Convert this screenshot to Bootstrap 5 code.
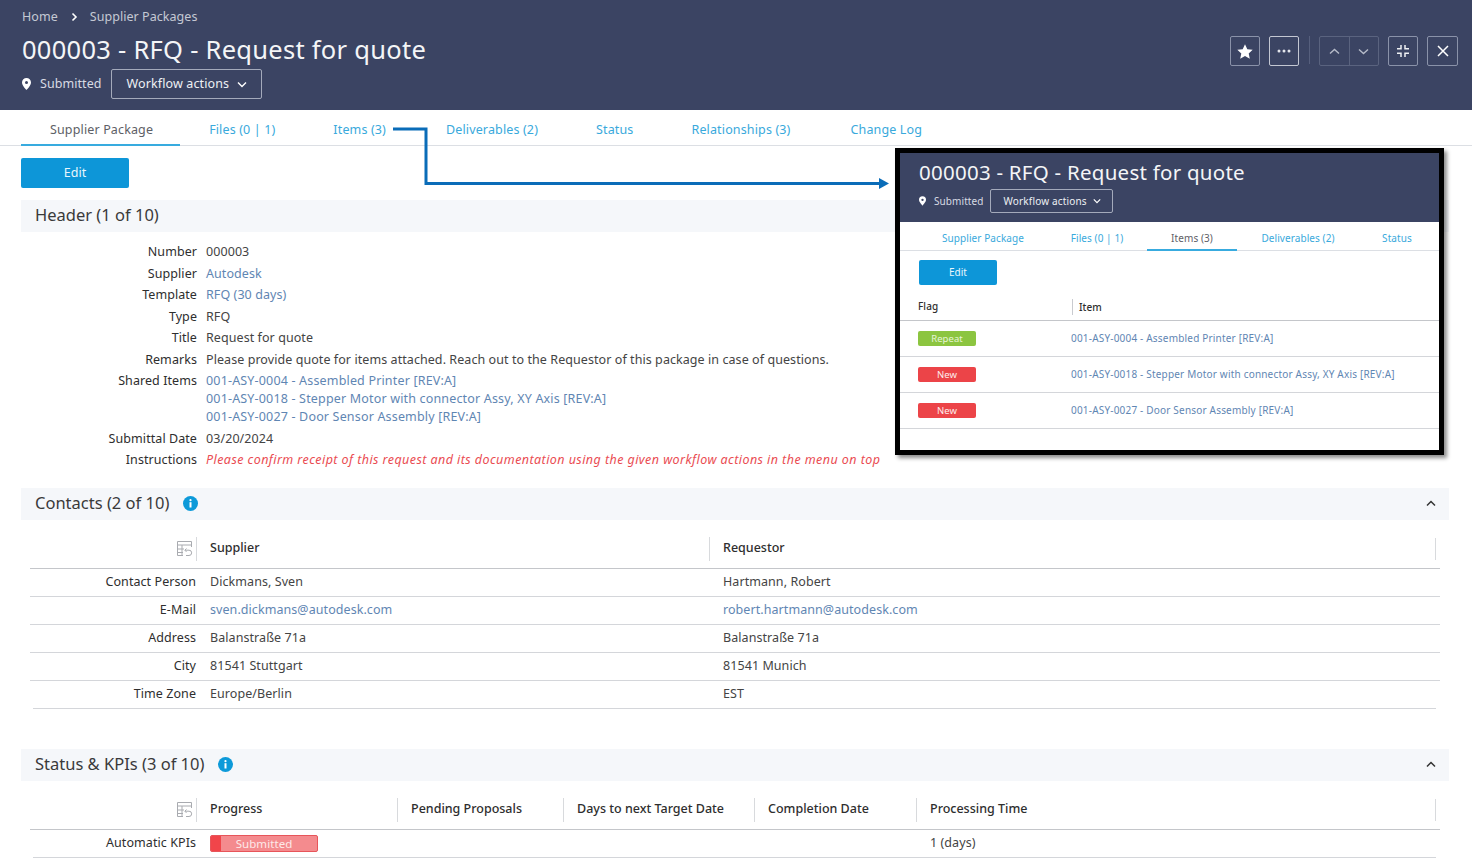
<!DOCTYPE html>
<html lang="en">
<head>
<meta charset="utf-8">
<title>000003 - RFQ - Request for quote</title>
<link href="https://cdn.jsdelivr.net/npm/bootstrap@5.3.0/dist/css/bootstrap.min.css" rel="stylesheet">
<style>
html,body{height:861px;overflow:hidden}
body{font-family:"Noto Sans",sans-serif;font-size:12.5px;color:#444;position:relative;letter-spacing:.07px;background:#fff}
a{text-decoration:none;color:#5f86b3}
.pkg-head{background:#3b4463;height:110px;padding:0 14px 0 22px;color:#fff}
.crumbs{height:33px;padding-bottom:0;line-height:16px;color:#c5c9d4;font-size:12.5px;letter-spacing:.05px}
.crumbs svg{margin:0 12px 0 13px}
.pkg-title{font-size:25.5px;font-weight:400;line-height:32px;margin:0 0 4px;letter-spacing:.27px;color:#f4f5f7}
.pin-status{color:#d8dbe3}
.pin-status>svg{margin-right:9px;flex:none}
.wf-btn{border:1px solid #a4aabb;color:#eef0f4;border-radius:2px;font-size:12.5px;height:30px;padding:0 14px 0 15px;margin-left:9px;background:transparent;display:inline-flex;align-items:center;gap:8px;letter-spacing:.12px}
.act-col{padding-top:36px}
.icon-box{width:30px;height:30px;border:1px solid #8a92a9;border-radius:2px;background:transparent;display:flex;align-items:center;justify-content:center;padding:0}
.icon-box.bright{border-color:#c3c7d2;margin-left:9px}
.icon-box.spaced{margin-left:9px}
.icon-box.wide{width:31px}
.bar-sep{width:1px;height:28px;background:#565f7d;margin:0 9px 0 10px}
.arrow-pair{display:flex;border:1px solid #5a637f;border-radius:2px;height:30px;width:60px}
.arrow-pair span{flex:1;display:flex;align-items:center;justify-content:center}
.arrow-pair span+span{border-left:1px solid #5a637f}
.tab-row{height:36px;border-bottom:1px solid #dcdfe4;padding-left:21px;flex-wrap:nowrap}
.tab-row .tab-lnk{padding:0 29px;height:36px;line-height:39px;color:#39a9dc;font-size:12.5px;display:block;white-space:nowrap;letter-spacing:.14px}
.tab-row .tab-lnk.on{color:#5e6066;border-bottom:2px solid #38abdf;padding-right:27px}
.tab-row .tab-lnk.roomy{padding-right:31px}
.edit-btn{background:#0d96d8;color:#e9f6fc;border:0;border-radius:2px;width:108px;height:30px;font-size:12.5px;padding:0;display:block}
.edit-btn.main{margin:12px 0 12px 21px}
.sec-bar{background:#f5f7fa;height:32px;margin:0 23px 0 21px;padding:0 14px 1px;display:flex;align-items:center;font-size:16.5px;letter-spacing:0;color:#3a3a3a}
.sec-bar .chev{margin-left:auto;margin-right:-1px}
.info-dot{margin-left:14px}
.field-grid{display:grid;grid-template-columns:176px 1fr;column-gap:9px;padding:9px 0 17px 21px;width:900px;line-height:21.5px}
.field-grid>.lab{text-align:right;color:#2e2e2e}
.shared{line-height:18px;padding:1.8px 0;letter-spacing:.17px}
.warn{color:#ea4c52;font-style:italic;white-space:nowrap;letter-spacing:.435px}
.grid-tbl{width:1410px;margin:10px 0 0 30px;table-layout:fixed;border-collapse:collapse;color:#444}
.grid-tbl td,.grid-tbl th{padding:0;height:28px;border-bottom:1px solid #d4d6da;vertical-align:middle;font-weight:400}
.grid-tbl th{height:39px;border-bottom-color:#c4c6ca;color:#2e2e2e;font-weight:500;letter-spacing:0}
.grid-tbl td:first-child{text-align:right;color:#2e2e2e}
.grid-tbl td+td{padding-left:14px}
.grid-tbl tr:last-child td{border-bottom:0;height:27px}
.hd-cell{display:flex;align-items:center;height:24px;padding-left:13px;border-left:1px solid #d8dadd}
.hd-icon{display:flex;justify-content:flex-end;padding-right:3px;height:24px;align-items:center}
.end-mark{position:relative}
.end-mark::after{content:"";position:absolute;right:4px;top:8px;bottom:8px;width:1px;background:#d8dadd}
.close-line{height:1px;background:#d4d6da;margin:0 36px 0 33px}
.gap-41{margin-top:40px}
.prog{display:flex;width:108px;height:17px;border-radius:2px;overflow:hidden;border:1px solid #e7555a;background:#f48b8e;color:#fde9e9;font-size:11.5px;line-height:15px}
.prog i{width:10px;background:#f1454a;display:block}
.prog span{flex:1;text-align:center;padding-right:10px}
/* inset */
.inset{position:absolute;left:895px;top:148px;width:549px;height:307px;border:5px solid #000;background:#fff;box-shadow:3px 3px 4px rgba(0,0,0,.45);font-size:10px;letter-spacing:.08px}
.inset-head{background:#3b4463;height:69px;padding:6px 0 0 19px;color:#fff}
.inset-title{font-size:20.5px;line-height:26px;letter-spacing:.25px;font-weight:400;margin:0 0 4px;color:#f4f5f7}
.inset-status{color:#d8dbe3;font-size:10px}
.inset .wf-btn{font-size:10px;height:24px;padding:0 11px 0 12px;margin-left:7px;gap:6px;letter-spacing:.17px}
.inset-tabs{height:29px;border-bottom:1px solid #dcdfe4;position:relative;flex-wrap:nowrap}
.inset-tabs .tab-lnk{height:29px;line-height:32px;color:#39a9dc;white-space:nowrap;text-align:center;display:block}
.inset-tabs .tab-lnk.on{color:#5e6066;border-bottom:2px solid #38abdf}
.tb-a{width:166px}.tb-b{width:62px}.tb-c{width:90px;margin-left:19px}.tb-d{width:122px}.tb-e{width:76px}
.edit-btn.small{width:78px;height:25px;font-size:10px;margin:9px 0 12px 19px}
.mini-tbl{width:100%;table-layout:fixed;border-collapse:collapse}
.mini-tbl th,.mini-tbl td{padding:0;height:36px;border-bottom:1px solid #d4d6da;font-weight:400}
.mini-tbl th{height:23px;border-bottom-color:#c4c6ca;color:#2e2e2e;vertical-align:top;padding-top:2px;font-weight:500}
.mini-tbl th:first-child,.mini-tbl td:first-child{padding-left:18px}
.mini-th{display:block;border-left:1px solid #c9cbd0;padding-left:6px;line-height:16px;margin-left:1px}
.flag{display:block;width:58px;height:15px;border-radius:2px;text-align:center;line-height:15px;color:#fdeceb;font-size:9.5px;background:#ec4448}
.flag.rep{background:#8cc540;color:#e8f5d6}
.mini-tbl a{letter-spacing:.19px}
.link-arrow{position:absolute;left:390px;top:125px;pointer-events:none}
</style>
</head>
<body>
<header class="pkg-head d-flex justify-content-between">
  <div>
    <div class="crumbs d-flex align-items-center"><span>Home</span><svg width="7" height="10" viewBox="0 0 7 10"><path d="M1.500 1.500 5 5 1.500 8.500" fill="none" stroke="#fff" stroke-width="1.600"/></svg><span>Supplier Packages</span></div>
    <h1 class="pkg-title">000003 - RFQ - Request for quote</h1>
    <div class="d-flex align-items-center pin-status">
      <svg width="9" height="12" viewBox="0 0 9 12"><path fill-rule="evenodd" fill="#fff" d="M4.500 0A4.500 4.500 0 0 0 0 4.500C0 7.500 4.500 12 4.500 12S9 7.500 9 4.500A4.500 4.500 0 0 0 4.500 0Zm0 3a1.500 1.500 0 1 1 0 3 1.500 1.500 0 0 1 0-3Z"/></svg>
      <span>Submitted</span>
      <button class="wf-btn" type="button">Workflow actions <svg width="10" height="7" viewBox="0 0 10 7"><path d="M1 1.500 5 5.500 9 1.500" fill="none" stroke="#fff" stroke-width="1.400"/></svg></button>
    </div>
  </div>
  <div class="act-col d-flex align-items-start">
    <button class="icon-box" type="button" aria-label="Favorite"><svg width="16" height="15" viewBox="0 0 16 15"><path fill="#fff" d="M8 .3 10.300 5.200 15.700 5.800 11.700 9.400 12.800 14.700 8 12 3.200 14.700 4.300 9.400 .3 5.800 5.700 5.200Z"/></svg></button>
    <button class="icon-box bright" type="button" aria-label="More"><svg width="14" height="4" viewBox="0 0 14 4"><circle cx="2" cy="2" r="1.500" fill="#e4e6ec"/><circle cx="7" cy="2" r="1.500" fill="#e4e6ec"/><circle cx="12" cy="2" r="1.500" fill="#e4e6ec"/></svg></button>
    <div class="bar-sep"></div>
    <div class="arrow-pair"><span><svg width="11" height="7" viewBox="0 0 11 7"><path d="M1 5.500 5.500 1.500 10 5.500" fill="none" stroke="#b6bbc9" stroke-width="1.400"/></svg></span><span><svg width="11" height="7" viewBox="0 0 11 7"><path d="M1 1.500 5.500 5.500 10 1.500" fill="none" stroke="#b6bbc9" stroke-width="1.400"/></svg></span></div>
    <button class="icon-box spaced" type="button" aria-label="Collapse"><svg width="12" height="12" viewBox="0 0 12 12"><path d="M4 0V3.800H0M8 0V3.800H12M4 12V8.200H0M8 12V8.200H12" fill="none" stroke="#eef0f4" stroke-width="1.500"/></svg></button>
    <button class="icon-box spaced wide" type="button" aria-label="Close"><svg width="12" height="12" viewBox="0 0 12 12"><path d="M1 1 11 11M11 1 1 11" stroke="#fff" stroke-width="1.500"/></svg></button>
  </div>
</header>

<nav class="nav tab-row">
  <a class="tab-lnk on" href="#">Supplier Package</a>
  <a class="tab-lnk" href="#">Files (0 | 1)</a>
  <a class="tab-lnk roomy" href="#">Items (3)</a>
  <a class="tab-lnk" href="#">Deliverables (2)</a>
  <a class="tab-lnk" href="#">Status</a>
  <a class="tab-lnk roomy" href="#">Relationships (3)</a>
  <a class="tab-lnk" href="#">Change Log</a>
</nav>

<button class="btn edit-btn main" type="button">Edit</button>

<section>
  <div class="sec-bar">Header (1 of 10)</div>
  <div class="field-grid">
    <div class="lab">Number</div><div>000003</div>
    <div class="lab">Supplier</div><div><a href="#">Autodesk</a></div>
    <div class="lab">Template</div><div><a href="#">RFQ (30 days)</a></div>
    <div class="lab">Type</div><div>RFQ</div>
    <div class="lab">Title</div><div>Request for quote</div>
    <div class="lab">Remarks</div><div>Please provide quote for items attached. Reach out to the Requestor of this package in case of questions.</div>
    <div class="lab">Shared Items</div>
    <div class="shared"><a href="#">001-ASY-0004 - Assembled Printer [REV:A]</a><br><a href="#">001-ASY-0018 - Stepper Motor with connector Assy, XY Axis [REV:A]</a><br><a href="#">001-ASY-0027 - Door Sensor Assembly [REV:A]</a></div>
    <div class="lab">Submittal Date</div><div>03/20/2024</div>
    <div class="lab">Instructions</div><div class="warn">Please confirm receipt of this request and its documentation using the given workflow actions in the menu on top</div>
  </div>
</section>

<section>
  <div class="sec-bar">Contacts (2 of 10)
    <svg class="info-dot" width="15" height="15" viewBox="0 0 15 15"><circle cx="7.500" cy="7.500" r="7.500" fill="#0d9ad9"/><circle cx="7.500" cy="4.200" r="1.100" fill="#fff"/><rect x="6.500" y="6.200" width="2" height="5.300" fill="#fff"/></svg>
    <svg class="chev" width="10" height="7" viewBox="0 0 10 7"><path d="M1 5.500 5 1.500 9 5.500" fill="none" stroke="#333" stroke-width="1.500"/></svg>
  </div>
  <table class="grid-tbl">
    <colgroup><col style="width:166px"><col style="width:513px"><col></colgroup>
    <tr>
      <th><div class="hd-icon"><svg width="17" height="17" viewBox="0 0 17 17" fill="none" stroke="#a9abb0" stroke-width="1"><path d="M7 15.500H1.500V1.500H15.500V7M1.500 5H15.500M1.500 9H8M1.500 12.500H7M6 5V15.500"/><path d="M10.500 8.500 8.800 10.200 10.500 11.900M9 10.200H13A2.500 2.500 0 0 1 13 15.500H10"/></svg></div></th>
      <th><div class="hd-cell">Supplier</div></th>
      <th class="end-mark"><div class="hd-cell">Requestor</div></th>
    </tr>
    <tr><td>Contact Person</td><td>Dickmans, Sven</td><td>Hartmann, Robert</td></tr>
    <tr><td>E-Mail</td><td><a href="#">sven.dickmans@autodesk.com</a></td><td><a href="#">robert.hartmann@autodesk.com</a></td></tr>
    <tr><td>Address</td><td>Balanstraße 71a</td><td>Balanstraße 71a</td></tr>
    <tr><td>City</td><td>81541 Stuttgart</td><td>81541 Munich</td></tr>
    <tr><td>Time Zone</td><td>Europe/Berlin</td><td>EST</td></tr>
  </table>
  <div class="close-line"></div>
</section>

<section class="gap-41">
  <div class="sec-bar">Status &amp; KPIs (3 of 10)
    <svg class="info-dot" width="15" height="15" viewBox="0 0 15 15"><circle cx="7.500" cy="7.500" r="7.500" fill="#0d9ad9"/><circle cx="7.500" cy="4.200" r="1.100" fill="#fff"/><rect x="6.500" y="6.200" width="2" height="5.300" fill="#fff"/></svg>
    <svg class="chev" width="10" height="7" viewBox="0 0 10 7"><path d="M1 5.500 5 1.500 9 5.500" fill="none" stroke="#333" stroke-width="1.500"/></svg>
  </div>
  <table class="grid-tbl">
    <colgroup><col style="width:166px"><col style="width:201px"><col style="width:166px"><col style="width:191px"><col style="width:162px"><col></colgroup>
    <tr>
      <th><div class="hd-icon"><svg width="17" height="17" viewBox="0 0 17 17" fill="none" stroke="#a9abb0" stroke-width="1"><path d="M7 15.500H1.500V1.500H15.500V7M1.500 5H15.500M1.500 9H8M1.500 12.500H7M6 5V15.500"/><path d="M10.500 8.500 8.800 10.200 10.500 11.900M9 10.200H13A2.500 2.500 0 0 1 13 15.500H10"/></svg></div></th>
      <th><div class="hd-cell">Progress</div></th>
      <th><div class="hd-cell">Pending Proposals</div></th>
      <th><div class="hd-cell">Days to next Target Date</div></th>
      <th><div class="hd-cell">Completion Date</div></th>
      <th class="end-mark"><div class="hd-cell">Processing Time</div></th>
    </tr>
    <tr><td>Automatic KPIs</td><td><div class="prog"><i></i><span>Submitted</span></div></td><td></td><td></td><td></td><td>1 (days)</td></tr>
  </table>
  <div class="close-line"></div>
</section>

<svg class="link-arrow" width="500" height="66" viewBox="0 0 500 66"><path d="M3 4H36V58.500H490" fill="none" stroke="#0a6cb8" stroke-width="3"/><path d="M489 53 499 58.500 489 64Z" fill="#0a6cb8"/></svg>

<aside class="inset">
  <div class="inset-head">
    <h2 class="inset-title">000003 - RFQ - Request for quote</h2>
    <div class="d-flex align-items-center inset-status">
      <svg width="7" height="10" viewBox="0 0 9 12" class="me-2"><path fill-rule="evenodd" fill="#fff" d="M4.500 0A4.500 4.500 0 0 0 0 4.500C0 7.500 4.500 12 4.500 12S9 7.500 9 4.500A4.500 4.500 0 0 0 4.500 0Zm0 3a1.500 1.500 0 1 1 0 3 1.500 1.500 0 0 1 0-3Z"/></svg>
      <span>Submitted</span>
      <button class="wf-btn" type="button">Workflow actions <svg width="8" height="6" viewBox="0 0 10 7"><path d="M1 1.500 5 5.500 9 1.500" fill="none" stroke="#fff" stroke-width="1.500"/></svg></button>
    </div>
  </div>
  <nav class="nav inset-tabs">
    <a class="tab-lnk tb-a" href="#">Supplier Package</a>
    <a class="tab-lnk tb-b" href="#">Files (0 | 1)</a>
    <a class="tab-lnk tb-c on" href="#">Items (3)</a>
    <a class="tab-lnk tb-d" href="#">Deliverables (2)</a>
    <a class="tab-lnk tb-e" href="#">Status</a>
  </nav>
  <button class="btn edit-btn small" type="button">Edit</button>
  <table class="mini-tbl">
    <colgroup><col style="width:171px"><col></colgroup>
    <tr><th>Flag</th><th><span class="mini-th">Item</span></th></tr>
    <tr><td><span class="flag rep">Repeat</span></td><td><a href="#">001-ASY-0004 - Assembled Printer [REV:A]</a></td></tr>
    <tr><td><span class="flag">New</span></td><td><a href="#">001-ASY-0018 - Stepper Motor with connector Assy, XY Axis [REV:A]</a></td></tr>
    <tr><td><span class="flag">New</span></td><td><a href="#">001-ASY-0027 - Door Sensor Assembly [REV:A]</a></td></tr>
  </table>
</aside>
</body>
</html>
